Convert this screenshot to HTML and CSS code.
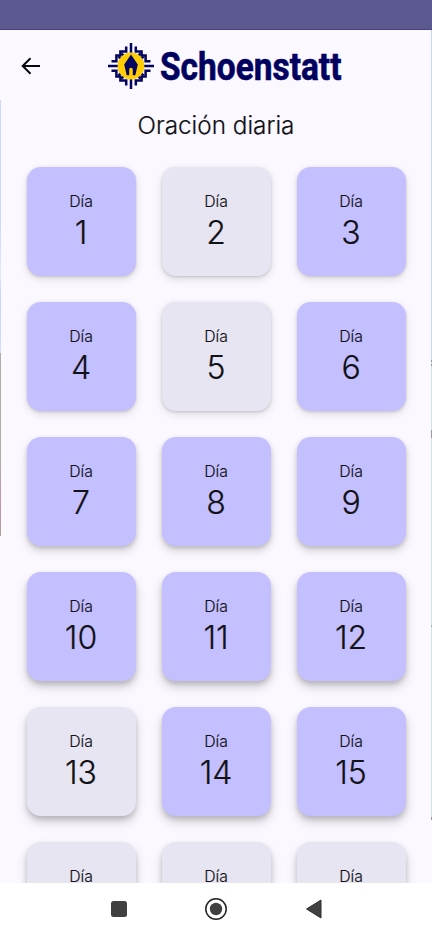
FILE: index.html
```html
<!DOCTYPE html>
<html lang="es">
<head>
<meta charset="utf-8">
<meta name="viewport" content="width=device-width">
<title>Schoenstatt – Oración diaria</title>
<link rel="stylesheet" href="styles.css">
</head>
<body>
<div class="screen">
  <div class="status"></div>
  <div class="app">
    <header class="top">
      <svg class="back" viewBox="0 0 24 24"><path d="M21 12H4M11.5 4.2L3.7 12l7.8 7.8"/></svg>
      <svg class="emblem" viewBox="-24 -24 48 48">
        <defs>
          <g id="arm">
            <path d="M0 -23V-13" class="bar"/>
            <path d="M-4.8 -19.5V-14.6H-10.6V-10.6H-14.6V-4.8H-19.5" class="step"/>
            <path d="M-9.4 -12.6L-7.6 -10.4M-12.6 -9.4L-10.4 -7.6" class="slit"/>
          </g>
        </defs>
        <g class="cross">
          <use href="#arm"/><use href="#arm" transform="rotate(90)"/><use href="#arm" transform="rotate(180)"/><use href="#arm" transform="rotate(270)"/>
        </g>
        <circle r="13.4" class="sun"/>
        <path class="house" d="M0 -11.5L6.8 -1.5L4.3 9.3H1.8V3.5Q1.8 1.8 0 1.8T-1.8 3.5V9.3H-4.3L-6.8 -1.5Z"/>
      </svg>
      <svg class="brand" viewBox="0 0 190 60"><text x="0" y="43.8" textLength="181.5" lengthAdjust="spacingAndGlyphs">Schoenstatt</text></svg>
    </header>
    <h1>Oración diaria</h1>
    <main class="days">
      <div class="day"><span>Día</span><b>1</b></div>
      <div class="day done"><span>Día</span><b>2</b></div>
      <div class="day"><span>Día</span><b>3</b></div>
      <div class="day"><span>Día</span><b>4</b></div>
      <div class="day done"><span>Día</span><b>5</b></div>
      <div class="day"><span>Día</span><b>6</b></div>
      <div class="day s3"><span>Día</span><b>7</b></div>
      <div class="day s3"><span>Día</span><b>8</b></div>
      <div class="day s3"><span>Día</span><b>9</b></div>
      <div class="day s4"><span>Día</span><b>10</b></div>
      <div class="day s4"><span>Día</span><b>11</b></div>
      <div class="day s4"><span>Día</span><b>12</b></div>
      <div class="day done s4"><span>Día</span><b>13</b></div>
      <div class="day s4"><span>Día</span><b>14</b></div>
      <div class="day s4"><span>Día</span><b>15</b></div>
      <div class="day done s4"><span>Día</span></div>
      <div class="day done s4"><span>Día</span></div>
      <div class="day done s4"><span>Día</span></div>
    </main>
    <div class="edge left"></div>
    <div class="edge right"></div>
  </div>
  <nav class="nav">
    <svg viewBox="-12 -12 24 24"><rect x="-8" y="-8" width="16" height="16" rx="2.5"/></svg>
    <svg viewBox="-12 -12 24 24"><circle r="10.2" class="ring"/><circle r="6.2"/></svg>
    <svg viewBox="-12 -12 24 24"><path d="M-7.5 0L7 -9V9Z" class="tri"/></svg>
  </nav>
</div>
</body>
</html>
```
FILE: styles.css
```css
* { box-sizing: border-box; }
body { margin: 0; font-family: Inter, sans-serif; color: #111116; }
.screen { width: 432px; height: 935px; display: flex; flex-direction: column; overflow: hidden; background: #fff; }
.status { height: 30px; flex: none; background: #5c5890; border-bottom: 1px solid #494381; }
.app { position: relative; height: 853px; flex: none; overflow: hidden; background: #fbf8ff; }
.top { display: flex; align-items: center; height: 72px; padding-left: 19px; }
.back { width: 24px; height: 24px; fill: none; stroke: #08080c; stroke-width: 2; }
.emblem { width: 48px; height: 48px; margin-left: 64px; }
.cross { fill: none; stroke: #03045f; stroke-width: 2.5; }
.cross .bar { stroke-width: 3.6; }
.cross .step { stroke-width: 3; }
.cross .slit { stroke: #fbf8ff; stroke-width: 1; }
.sun { fill: #ffcd05; }
.house { fill: #03045f; }
.brand { width: 190px; height: 60px; margin-left: 5px; overflow: visible; }
.brand text { font: 700 38px Roboto, sans-serif; fill: #00005f; stroke: #00005f; stroke-width: .6; }
h1 { margin: 7px 0 26px; height: 32px; line-height: 32px; font-size: 24.3px; font-weight: 300; -webkit-text-stroke: .2px; text-align: center; }
.days { display: grid; grid-template-columns: repeat(3, 109px); grid-auto-rows: 109px; gap: 26px; padding-left: 26.5px; }
.day { display: flex; flex-direction: column; align-items: center; padding-top: 25px; border-radius: 14px; background: #c4bfff; box-shadow: 0 1px 3px #00000026, 0 3px 8px #0000001f; }
.day.done { background: #e8e5f2; }
.day.s3 { box-shadow: 0 2px 4px #00000026, 0 5px 10px #00000026; }
.day.s4 { box-shadow: 0 3px 5px #00000026, 0 6px 11px #0000002b; }
.day span { font-size: 15.8px; line-height: 20px; font-weight: 300; -webkit-text-stroke: .15px; }
.day b { font-size: 32px; line-height: 42px; font-weight: 300; -webkit-text-stroke: .2px; }
.edge { position: absolute; width: 1px; }
.edge.left { left: 0; top: 70px; height: 436px; background: linear-gradient(#cbd9fc 0 28%, #e4e9fb 40%, #c0d6fb 45%, #d4def8 58%, #b0aba4 58% 83%, #c695a7 93%, #aaa59a); }
.edge.right { right: 0; top: 0; height: 790px; background: linear-gradient(#c5d9ec 0 330px, #999 330px 332px, #c5d9ec 332px 334px, #999 334px 336px, #cfe6df 336px 400px, #999 400px 408px, #cfe6df 408px 595px, #aaa 595px 597px, #cfe6df 597px 787px, #999 787px); }
.nav { flex: 1; display: flex; justify-content: center; gap: 73.5px; padding-top: 14px; }
.nav svg { width: 24px; height: 24px; fill: #404040; }
.nav .ring { fill: none; stroke: #222; stroke-width: 1.5; }
.tri { stroke: #303030; stroke-width: 1; stroke-linejoin: round; }
```
